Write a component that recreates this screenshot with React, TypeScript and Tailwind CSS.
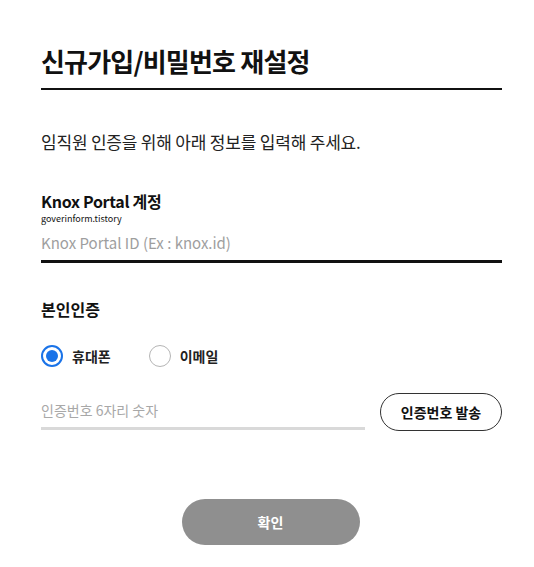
import { useState } from "react";

const font = { fontFamily: '"Noto Sans CJK KR", "Noto Sans", sans-serif' };

function Radio({ label, checked, onClick }: { label: string; checked: boolean; onClick: () => void }) {
  return (
    <button className="flex items-center gap-[9px]" onClick={onClick}>
      <span
        className={
          checked
            ? "flex h-[22px] w-[22px] items-center justify-center rounded-full border-2 border-[#1a73e8]"
            : "flex h-[22px] w-[22px] items-center justify-center rounded-full border border-[#b5b5b5]"
        }
      >
        {checked && <span className="h-[12px] w-[12px] rounded-full bg-[#1a73e8]" />}
      </span>
      <span className="text-[14px] font-bold text-[#222]">{label}</span>
    </button>
  );
}

export default function App() {
  const [method, setMethod] = useState("phone");

  return (
    <div className="h-[567px] w-[534px] bg-white" style={font}>
      <div className="ml-[41px] w-[461px] pt-[43px]">
        <h1 className="text-[26px] font-bold leading-[36px] tracking-[-0.8px] text-[#111]">신규가입/비밀번호 재설정</h1>
        <div className="mt-[9px] h-[2px] bg-[#111]" />

        <p className="mt-[40px] text-[17px] leading-[24px] tracking-[-0.2px] text-[#222]">
          임직원 인증을 위해 아래 정보를 입력해 주세요.
        </p>

        <div className="mt-[36px]">
          <div className="text-[16px] font-bold leading-[22px] tracking-[-0.3px] text-[#111]">Knox Portal 계정</div>
          <div className="mt-[1px] text-[9px] leading-[12px] text-[#111]">goverinform.tistory</div>
          <input
            className="mt-[7px] w-full border-b-[3px] border-[#111] pb-[6px] text-[15px] leading-[22px] text-[#222] outline-none placeholder:text-[#9e9e9e]"
            placeholder="Knox Portal ID (Ex : knox.id)"
          />
        </div>

        <div className="mt-[34px] text-[16px] font-bold leading-[24px] text-[#111]">본인인증</div>

        <div className="mt-[24px] flex items-center gap-[38px]">
          <Radio label="휴대폰" checked={method === "phone"} onClick={() => setMethod("phone")} />
          <Radio label="이메일" checked={method === "email"} onClick={() => setMethod("email")} />
        </div>

        <div className="mt-[26px] flex items-center justify-between">
          <input
            className="w-[324px] border-b-[3px] border-[#d9d9d9] pb-[6px] pt-[4px] text-[14px] leading-[22px] outline-none placeholder:text-[#a8a8a8]"
            placeholder="인증번호 6자리 숫자"
          />
          <button className="h-[38px] w-[122px] rounded-full border border-[#333] text-[14px] font-bold text-[#111]">
            인증번호 발송
          </button>
        </div>

        <div className="mt-[68px] flex justify-center pr-[2px]">
          <button className="h-[46px] w-[178px] rounded-full bg-[#8f8f8f] text-[14px] font-bold text-white">
            확인
          </button>
        </div>
      </div>
    </div>
  );
}
